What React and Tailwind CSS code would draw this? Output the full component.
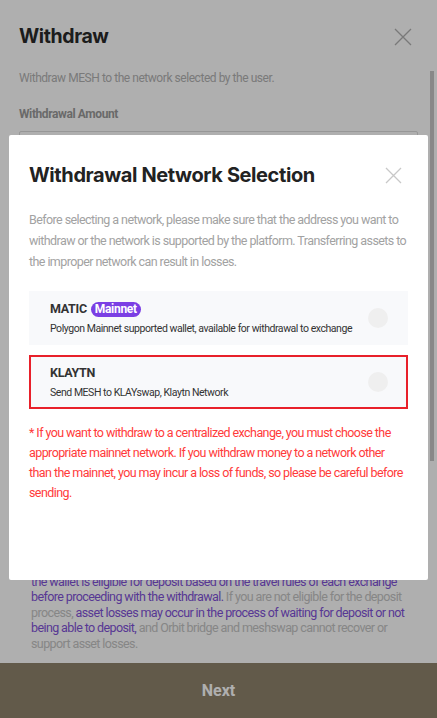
import React from "react";

export default function App() {
  const networks = [
    { name: "MATIC", badge: "Mainnet", desc: "Polygon Mainnet supported wallet, available for withdrawal to exchange", selected: false },
    { name: "KLAYTN", badge: null, desc: "Send MESH to KLAYswap, Klaytn Network", selected: true },
  ];

  return (
    <div className="relative w-[437px] h-[718px] overflow-hidden bg-white font-['Roboto',sans-serif]">
      {/* Page behind the dialog */}
      <div className="flex flex-col h-full">
        <div className="flex-1 flex flex-col px-[19px] pt-[24px] overflow-hidden">
          <div className="flex items-center justify-between h-[26px]">
            <h1 className="text-[19.5px] font-bold text-[#2a2a2a] font-['Inter',sans-serif] tracking-[-0.4px]">Withdraw</h1>
            <svg className="w-[18px] h-[18px] mr-[6px]" viewBox="0 0 18 18" fill="none" stroke="#b0b0b0" strokeWidth="1.3">
              <path d="M1 1L17 17M17 1L1 17" />
            </svg>
          </div>
          <p className="mt-[19px] text-[12px] text-[#b2b2b2] tracking-[-0.45px]">Withdraw MESH to the network selected by the user.</p>
          <p className="mt-[18px] text-[12px] font-bold text-[#9a9a9a] tracking-[-0.4px]">Withdrawal Amount</p>
          <div className="mt-[8px] h-[44px] border border-[#dcdcdc] rounded-[2px]" />
          <div className="flex-1" />
          <p className="pl-[12px] pr-[8px] pb-[12px] text-[12.5px] leading-[15.5px] text-[#c4c4c4] tracking-[-0.6px]">
            <span className="text-[#7f52d8]">the wallet is eligible for deposit based on the travel rules of each exchange before proceeding with the withdrawal.</span>{" "}
            If you are not eligible for the deposit process,{" "}
            <span className="text-[#7f52d8]">asset losses may occur in the process of waiting for deposit or not being able to deposit,</span>{" "}
            and Orbit bridge and meshswap cannot recover or support asset losses.
          </p>
        </div>
        <button className="h-[55px] w-full bg-[#8f836c] text-white text-[16px] font-bold">Next</button>
      </div>

      {/* page scrollbar */}
      <div className="absolute left-[430px] top-[71px] w-[4px] h-[390px] bg-[#c6c6c6]" />

      {/* Dim overlay */}
      <div className="absolute inset-0 bg-black/[0.314]" />

      {/* Dialog */}
      <div className="absolute left-[9px] top-[135px] w-[419px] h-[445px] bg-white rounded-[2px] px-[20px] pt-[26px]">
        <div className="flex items-center justify-between h-[28px]">
          <h2 className="text-[20px] font-bold text-[#222] font-['Inter',sans-serif] tracking-[-0.4px]">Withdrawal Network Selection</h2>
          <svg className="w-[17px] h-[17px] mr-[6px]" viewBox="0 0 17 17" fill="none" stroke="#c8c8c8" strokeWidth="1.3">
            <path d="M1 1L16 16M16 1L1 16" />
          </svg>
        </div>
        <p className="mt-[20px] text-[12.5px] leading-[21px] text-[#a2a2a2] tracking-[-0.58px]">
          Before selecting a network, please make sure that the address you want to withdraw or the network is supported by the platform. Transferring assets to the improper network can result in losses.
        </p>

        <div className="mt-[19px] flex flex-col gap-[10px]">
          {networks.map((n) => (
            <div
              key={n.name}
              className={`h-[54px] flex items-center justify-between bg-[#f8f9fb] ${n.selected ? "border-2 border-[#e8202a] pl-[19px] pr-[18px]" : "pl-[21px] pr-[20px]"}`}
            >
              <div className="flex flex-col">
                <div className="flex items-center gap-[4px] h-[20px]">
                  <span className="text-[12.5px] font-bold text-[#333] tracking-[-0.3px]">{n.name}</span>
                  {n.badge && (
                    <span className="h-[15px] px-[4px] rounded-full bg-[#7b3fe4] text-white text-[12px] font-bold leading-[15px] tracking-[-0.3px]">{n.badge}</span>
                  )}
                </div>
                <span className="mt-[2px] text-[10.5px] leading-[16px] text-[#333] tracking-[-0.45px]">{n.desc}</span>
              </div>
              <div className="w-[20px] h-[20px] rounded-full bg-[#efefef]" />
            </div>
          ))}
        </div>

        <p className="mt-[14px] text-[12.5px] leading-[20px] text-[#ff3b3b] tracking-[-0.58px]">
          * If you want to withdraw to a centralized exchange, you must choose the appropriate mainnet network. If you withdraw money to a network other than the mainnet, you may incur a loss of funds, so please be careful before sending.
        </p>
      </div>
    </div>
  );
}
